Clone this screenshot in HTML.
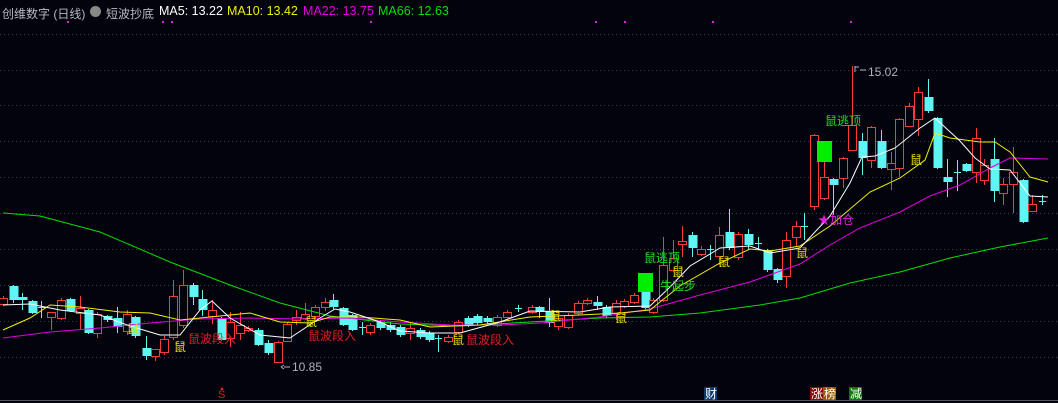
<!DOCTYPE html>
<html><head><meta charset="utf-8"><style>
html,body{margin:0;padding:0;background:#03030d;width:1058px;height:403px;overflow:hidden;font-family:"Liberation Sans","Noto Sans CJK SC",sans-serif}
svg{position:absolute;left:0;top:0}
.h{position:absolute;top:4px;font-size:12.5px;white-space:nowrap}
.k{font-size:12px;top:5px}
</style></head><body>
<svg id="s" width="1058" height="403" xmlns="http://www.w3.org/2000/svg">
<g stroke="#3a3d4a" stroke-dasharray="1,3" stroke-width="1">
<line x1="0" y1="34.5" x2="1058" y2="34.5"/><line x1="0" y1="70.5" x2="1058" y2="70.5"/><line x1="0" y1="105.5" x2="1058" y2="105.5"/><line x1="0" y1="141.5" x2="1058" y2="141.5"/><line x1="0" y1="177.5" x2="1058" y2="177.5"/><line x1="0" y1="213.5" x2="1058" y2="213.5"/><line x1="0" y1="249.5" x2="1058" y2="249.5"/><line x1="0" y1="285.5" x2="1058" y2="285.5"/><line x1="0" y1="321.5" x2="1058" y2="321.5"/><line x1="0" y1="357.5" x2="1058" y2="357.5"/>
</g>
<line x1="0" y1="400.5" x2="1058" y2="400.5" stroke="#55575f"/>
<g id="c"></g>
<g fill="none" stroke-width="1">
<polyline stroke="#00e000" points="3,213 40,216 100,232 170,262 230,285 280,303 330,316 400,324 460,326 530,322 600,318 650,317 700,313 760,305 800,298 850,283 900,272 950,258 1000,247 1048,238"/>
<polyline stroke="#e000e0" points="3,338 50,332 100,328 150,323 200,319 250,318 300,319 350,318 400,322 450,325 500,325 540,323 600,317 650,309 700,295 750,282 800,264 830,245 860,228 900,212 930,196 960,185 990,168 1010,158 1048,159"/>
<polyline stroke="#f0f000" points="3,330 30,318 50,305 80,307 120,312 150,313 180,320 220,316 250,313 280,322 310,323 330,317 360,317 400,320 430,327 480,325 530,317 580,315 620,313 650,310 680,286 720,263 750,249 770,251 800,246 830,226 870,192 900,178 925,160 935,133 950,138 980,142 995,142 1010,152 1030,177 1048,182"/>
<polyline stroke="#ffffff" points="3,305 30,304 60,310 100,315 130,326 160,335 180,335 200,310 212,301 230,318 260,335 290,338 320,318 335,309 350,312 380,322 400,331 430,333 460,333 500,322 530,311 580,312 610,307 650,306 670,287 690,266 720,248 750,246 770,253 800,248 830,216 850,183 862,157 875,156 895,148 920,128 935,118 960,141 975,158 990,169 1010,170 1030,196 1048,197"/>
</g>
<rect x="638" y="273" width="15" height="19" fill="#00ee00"/>
<rect x="817" y="141" width="15" height="21" fill="#00ee00"/>
<g font-size="12" font-family="Liberation Sans,Noto Sans CJK SC,sans-serif">
<text x="174" y="351" fill="#e8e000">鼠</text>
<text x="188" y="343" fill="#e02020">鼠波段入</text>
<text x="127" y="333" fill="#e8e000">鼠</text>
<text x="305" y="326" fill="#e8e000">鼠</text>
<text x="308" y="340" fill="#e02020">鼠波段入</text>
<text x="452" y="344" fill="#e8e000">鼠</text>
<text x="466" y="344" fill="#e02020">鼠波段入</text>
<text x="615" y="322" fill="#e8e000">鼠</text>
<text x="549" y="320" fill="#e8e000">鼠</text>
<text x="644" y="262" fill="#22dd22">鼠逃顶</text>
<text x="672" y="276" fill="#e8e000">鼠</text>
<text x="660" y="290" fill="#22dd22">牛起步</text>
<text x="718" y="266" fill="#e8e000">鼠</text>
<text x="796" y="257" fill="#e8e000">鼠</text>
<text x="818" y="224" fill="#e020e0">★加仓</text>
<text x="825" y="125" fill="#22dd22">鼠逃顶</text>
<text x="910" y="164" fill="#e8e000">鼠</text>
<text x="868" y="76" fill="#b0b0b8">15.02</text>
<text x="292" y="371" fill="#b0b0b8">10.85</text>
<text x="218" y="398" fill="#e02020" font-size="11">S</text>
</g>
<path d="M855,66 v6 M855,67 h4 M860,70 h6" stroke="#b0b0b8" fill="none"/>
<path d="M284,367 h6 M281,367 l3,-2 M281,367 l3,2" stroke="#b0b0b8" fill="none"/>
<path d="M220,390 l2,-3 l2,3z" fill="#e02020"/>
<rect x="704" y="387" width="13" height="13" fill="#0b3a6e"/><text x="705" y="398" fill="#fff" font-size="12">财</text>
<rect x="810" y="387" width="13" height="13" fill="#8a0a0a"/><text x="811" y="398" fill="#fff" font-size="12">涨</text>
<rect x="823" y="387" width="13" height="13" fill="#9a5a00"/><text x="824" y="398" fill="#fff" font-size="12">榜</text>
<rect x="849" y="387" width="13" height="13" fill="#0a7a0a"/><text x="850" y="398" fill="#fff" font-size="12">减</text>
<g fill="#e020e0"><rect x="67" y="21" width="2" height="2"/><rect x="162" y="21" width="2" height="2"/><rect x="171" y="21" width="2" height="2"/><rect x="370" y="21" width="2" height="2"/><rect x="595" y="21" width="2" height="2"/><rect x="624" y="21" width="2" height="2"/><rect x="712" y="21" width="2" height="2"/><rect x="850" y="21" width="2" height="2"/></g>
</svg>
<div class="h k" style="left:2px;color:#b8b8c0">创维数字 (日线)</div>
<div style="position:absolute;left:90px;top:6px;width:11px;height:11px;border-radius:50%;background:#888"></div>
<div class="h k" style="left:106px;color:#b8b8c0">短波抄底</div>
<div class="h" style="left:159px;color:#fff">MA5: 13.22</div>
<div class="h" style="left:227px;color:#f0f000">MA10: 13.42</div>
<div class="h" style="left:303px;color:#e000e0">MA22: 13.75</div>
<div class="h" style="left:378px;color:#00e000">MA66: 12.63</div>
<script>
var d=[
[3,'r',298,304,296,306],[13,'c',286,300,285,303],[22,'c',297,300,293,310],[32,'c',301,313,300,314],[41,'x',307,307,301,318],[51,'r',312,317,312,330],[61,'r',300,318,298,320],[70,'c',299,311,298,312],[80,'r',308,313,296,330],[88,'c',310,333,309,334],[97,'r',314,333,312,338],[107,'c',316,320,315,322],[117,'c',318,327,307,333],[127,'r',314,331,310,335],[135,'c',317,336,316,338],[146,'c',348,356,336,360],[155,'r',349,356,349,361],[164,'r',339,352,336,355],[173,'r',296,337,280,340],[183,'r',285,325,270,328],[193,'c',285,297,283,305],[202,'c',299,310,290,316],[212,'r',310,316,300,324],[221,'c',318,340,317,341],[230,'r',322,338,312,347],[240,'r',325,333,312,340],[248,'r',328,330,326,332],[258,'c',330,345,328,346],[268,'c',343,353,340,355],[278,'r',342,362,341,363],[287,'r',324,341,322,342],[296,'r',317,320,310,325],[305,'r',314,318,303,320],[315,'r',307,316,305,318],[325,'r',302,307,298,311],[333,'c',300,307,294,310],[343,'c',308,325,307,326],[352,'c',315,330,314,331],[362,'x',327,327,322,335],[370,'r',325,332,323,335],[380,'c',322,328,320,330],[390,'c',325,330,322,332],[400,'c',327,335,325,337],[410,'r',328,333,323,340],[420,'c',330,337,328,339],[429,'c',333,340,331,342],[438,'x',338,338,335,352],[448,'r',337,341,335,343],[458,'r',322,332,320,334],[468,'c',318,325,316,327],[477,'c',316,323,314,325],[487,'c',318,322,316,324],[497,'r',317,325,315,327],[507,'r',312,317,310,319],[518,'x',308,308,305,312],
[532,'r',307,312,305,314],[539,'c',307,312,306,318],[549,'c',311,323,298,327],[558,'r',318,326,316,330],[568,'r',315,327,313,329],[578,'r',303,313,301,315],[587,'r',300,303,298,305],[597,'c',302,306,296,310],[606,'c',307,316,305,318],[616,'r',303,313,300,320],[624,'r',301,306,299,308],[634,'r',295,302,293,304],[645,'c',292,308,290,311],[653,'r',300,312,298,314],[663,'r',265,300,237,302],[673,'r',258,270,240,272],[682,'r',241,244,226,257],[692,'c',235,248,232,257],[701,'r',249,254,246,256],[710,'x',249,249,245,260],[719,'r',235,256,227,265],[729,'c',232,248,209,250],[738,'r',234,257,232,260],[748,'c',234,245,229,250],[758,'x',243,243,237,250],[767,'c',250,270,249,272],[777,'c',269,280,268,283],[786,'r',240,276,232,288],[796,'r',226,237,221,247],[804,'x',226,226,213,240],[814,'r',135,206,134,210],[824,'r',177,198,162,200],[833,'c',179,185,178,215],[843,'r',158,178,157,188],[852,'r',125,150,66,151],[862,'c',141,158,133,175],[871,'r',127,160,126,168],[881,'c',141,168,130,169],[891,'r',163,169,152,190],[899,'r',119,168,118,177],[909,'r',106,126,103,127],[918,'r',92,119,87,136],[928,'c',97,111,79,113],[937,'c',118,168,117,169],[947,'c',177,182,159,197],[957,'x',172,172,160,191],[966,'c',164,171,163,172],[976,'r',138,172,128,183],[984,'r',165,180,159,185],[994,'c',159,191,138,202],[1003,'r',184,193,178,205],[1013,'r',172,184,147,213],[1023,'c',180,222,179,223],[1032,'r',204,211,195,212],[1042,'x',201,201,195,205]];
var s='';
d.forEach(function(a){var x=a[0],t=a[1];var col=t=='r'?'#ff3a3a':'#5ff5f5';
s+='<line x1="'+(x+.5)+'" y1="'+a[4]+'" x2="'+(x+.5)+'" y2="'+a[5]+'" stroke="'+col+'"/>';
if(t=='x'){s+='<line x1="'+(x-3)+'" y1="'+(a[2]+.5)+'" x2="'+(x+4)+'" y2="'+(a[2]+.5)+'" stroke="'+col+'"/>';}
else if(t=='r'){s+='<rect x="'+(x-3.5)+'" y="'+(a[2]+.5)+'" width="8" height="'+Math.max(1,a[3]-a[2])+'" fill="#03030d" stroke="'+col+'"/>';}
else{s+='<rect x="'+(x-3.5)+'" y="'+a[2]+'" width="9" height="'+Math.max(2,a[3]-a[2])+'" fill="'+col+'"/>';}
});
document.getElementById('c').innerHTML=s;
</script>
</body></html>
